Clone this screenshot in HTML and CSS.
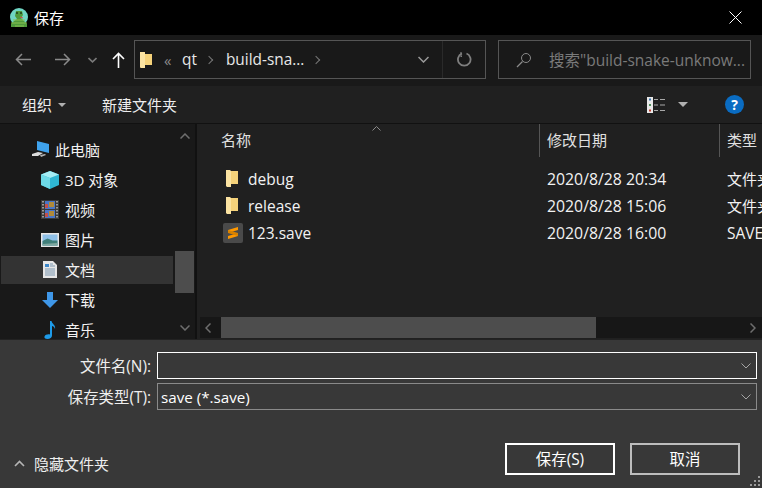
FILE: index.html
```html
<!DOCTYPE html>
<html lang="zh-CN">
<head>
    <meta charset="UTF-8">
    <title>保存</title>
    <link rel="stylesheet" href="styles.css">
</head>
<body>
    <div class="dialog">
        <header class="titlebar">
            <svg class="app-icon" width="20" height="20" viewBox="0 0 20 20">
                <circle cx="10" cy="9" r="9" fill="#6fd6c4"/>
                <path d="M7 3h6l1 4-2 3 3 3 3 3v3H2v-3l3-3 3-2-2-3z" fill="#4f9a3c"/>
                <path d="M2 15h16M4 12h12M6 18h9" stroke="#8cc152" stroke-width="1"/>
                <circle cx="8" cy="5" r="1" fill="#1d3b1d"/>
                <circle cx="12" cy="5" r="1" fill="#1d3b1d"/>
                <path d="M11 9l3 1" stroke="#d84a4a"/>
            </svg>
            <span class="title-text">保存</span>
            <svg class="close-icon" width="13" height="13" viewBox="0 0 13 13">
                <path d="M.5.5l12 12M12.5.5l-12 12" stroke="#fff" fill="none"/>
            </svg>
        </header>

        <nav class="navbar">
            <span class="nav-btn back">
                <svg width="17" height="13" viewBox="0 0 17 13"><path d="M16 6.500H1.500M7 1L1.500 6.500 7 12" stroke="#8a8a8a" stroke-width="1.500" fill="none"/></svg>
            </span>
            <span class="nav-btn forward">
                <svg width="17" height="13" viewBox="0 0 17 13"><path d="M1 6.500h14.500M10 1l5.500 5.500L10 12" stroke="#8a8a8a" stroke-width="1.500" fill="none"/></svg>
            </span>
            <span class="nav-btn recent">
                <svg width="9" height="6" viewBox="0 0 9 6"><path d="M.5 1l4 3.800 4-3.800" stroke="#7a7a7a" stroke-width="1.600" fill="none"/></svg>
            </span>
            <span class="nav-btn up">
                <svg width="13" height="16" viewBox="0 0 13 16"><path d="M6.500 16V1.500M1 7l5.500-5.500L12 7" stroke="#fff" stroke-width="1.600" fill="none"/></svg>
            </span>
            <div class="address">
                <svg class="addr-folder" width="12" height="16" viewBox="0 0 12 16">
                    <path d="M0 0h5v2h7v11H5v3H1l-1-1z" fill="#f5d27a"/>
                    <path d="M0 0h4l1 1v15H1l-1-1z" fill="#fbe3a2"/>
                </svg>
                <span class="crumb-more">«</span>
                <span class="crumb">qt</span>
                <span class="crumb-sep"></span>
                <span class="crumb">build-sna...</span>
                <span class="crumb-sep"></span>
                <span class="addr-drop">
                    <svg width="11" height="7" viewBox="0 0 11 7"><path d="M.5 1l5 5 5-5" stroke="#9a9a9a" stroke-width="1.500" fill="none"/></svg>
                </span>
                <span class="addr-refresh">
                    <svg width="15" height="15" viewBox="0 0 15 15"><path d="M9.500 1.500a6.300 6.300 0 1 1-4.500 0" stroke="#7f7f7f" stroke-width="1.800" fill="none"/><path d="M4 0v4.500h1" stroke="#7f7f7f" stroke-width="1.200" fill="none"/></svg>
                </span>
            </div>
            <div class="search">
                <svg width="16" height="16" viewBox="0 0 16 16"><circle cx="10" cy="6" r="4.500" stroke="#8a8a8a" fill="none"/><path d="M6.500 9.500L1 15" stroke="#8a8a8a" stroke-width="1.200"/></svg>
                <span class="search-text">搜索"build-snake-unknow...</span>
            </div>
        </nav>

        <div class="toolbar">
            <span class="tool org">组织<i class="caret"></i></span>
            <span class="tool">新建文件夹</span>
            <span class="tool-right">
                <svg width="18" height="16" viewBox="0 0 18 16">
                    <rect x="0" y="0" width="6" height="16" fill="#e8e8e8"/>
                    <rect x="2" y="1.500" width="2" height="2" fill="#3c76b0"/>
                    <rect x="2" y="7" width="2" height="2" fill="#4f8f5a"/>
                    <rect x="2" y="12.500" width="2" height="2" fill="#c0392b"/>
                    <path d="M7 2.500h4M13 2.500h5M7 8h4M13 8h5M7 13.500h4M13 13.500h5" stroke="#a8a8a8"/>
                </svg>
                <i class="caret view-caret"></i>
                <span class="help">?</span>
            </span>
        </div>

        <div class="main">
            <aside class="sidebar">
                <ul class="tree">
                    <li class="tree-item root">
                        <svg width="19" height="17" viewBox="0 0 19 17"><path d="M6 0l12 3v9L6 9z" fill="#3fa3ee"/><path d="M1 13l6-2 5 1-5 3H1z" fill="#dcdcdc"/><path d="M9 14l5-1 1 1-5 2z" fill="#b0b0b0"/></svg>
                        <span>此电脑</span>
                    </li>
                    <li class="tree-item">
                        <svg width="18" height="18" viewBox="0 0 18 18"><path d="M9 0l9 3.500v10.500L9 18 0 14V3.500z" fill="#2fb6d2"/><path d="M9 0l9 3.500L9 7 0 3.500z" fill="#a5eef5"/><path d="M0 3.500L9 7v11L0 14z" fill="#6edbe8"/></svg>
                        <span>3D 对象</span>
                    </li>
                    <li class="tree-item">
                        <svg width="18" height="19" viewBox="0 0 18 19"><rect width="18" height="19" fill="#3a3a3a"/><rect x="4" y="1" width="10" height="8" fill="#4a76c8"/><rect x="4" y="10" width="10" height="8" fill="#4a76c8"/><rect x="8" y="2" width="5" height="5" fill="#b08a3a"/><rect x="8" y="11" width="5" height="5" fill="#b08a3a"/><rect x="4" y="4" width="3" height="4" fill="#c0504d"/><rect x="4" y="13" width="3" height="4" fill="#c0504d"/><path d="M2 1v17M16 1v17" stroke="#bbb" stroke-width="1.500" stroke-dasharray="1.500 1.500"/></svg>
                        <span>视频</span>
                    </li>
                    <li class="tree-item">
                        <svg width="18" height="14" viewBox="0 0 18 14"><rect width="18" height="14" fill="#e6e6e6"/><rect x="1.500" y="1.500" width="15" height="11" fill="#8fc0e8"/><path d="M1.500 8l5-2.500 5 2 5 0v5h-15z" fill="#3f7f7a"/><path d="M1.500 11l15-1v2.500h-15z" fill="#7fa8a0"/></svg>
                        <span>图片</span>
                    </li>
                    <li class="tree-item active">
                        <svg width="14" height="17" viewBox="0 0 14 17"><path d="M0 0h10l4 4v13H0z" fill="#e6e6e6"/><path d="M2 3h4v3H2z" fill="#3c86c8"/><path d="M7 3h3M7 5h5M2 8h10M2 10h10M2 12h10M2 14h10" stroke="#7d98b0"/></svg>
                        <span>文档</span>
                    </li>
                    <li class="tree-item">
                        <svg width="16" height="16" viewBox="0 0 16 16"><path d="M5 0h6v8h5l-8 8-8-8h5z" fill="#3f97e8"/></svg>
                        <span>下载</span>
                    </li>
                    <li class="tree-item">
                        <svg width="12" height="18" viewBox="0 0 12 18"><path d="M6 0h1.500c.5 3 4.500 4 3.500 8-.500-2-2-3-3-3v9.500c0 2-2 3.500-4.500 3.500S0 17 .5 15.500 3.500 13 6 13.500z" fill="#1e9be8"/></svg>
                        <span>音乐</span>
                    </li>
                </ul>
                <div class="vscroll">
                    <svg width="10" height="6" viewBox="0 0 10 6"><path d="M.5 5.500L5 1l4.500 4.500" stroke="#6e6e6e" stroke-width="1.500" fill="none"/></svg>
                    <div class="vtrack"><div class="vthumb"></div></div>
                    <svg width="10" height="6" viewBox="0 0 10 6"><path d="M.5.500L5 5l4.500-4.500" stroke="#6e6e6e" stroke-width="1.500" fill="none"/></svg>
                </div>
            </aside>

            <section class="files">
                <div class="file-head">
                    <svg class="sort-mark" width="9" height="5" viewBox="0 0 9 5"><path d="M.5 4.500l4-4 4 4" stroke="#8a8a8a" fill="none"/></svg>
                    <span class="col col-name">名称</span>
                    <span class="col col-date">修改日期</span>
                    <span class="col col-type">类型</span>
                </div>
                <div class="file-rows">
                    <div class="file-row">
                        <span class="col-name">
                            <svg width="12" height="17" viewBox="0 0 12 17"><path d="M5 1h7v13H5z" fill="#f5d27a"/><path d="M0 0h4l1 1v16H1l-1-1z" fill="#fbe3a2"/></svg>
                            debug
                        </span>
                        <span class="col-date">2020/8/28 20:34</span>
                        <span class="col-type">文件夹</span>
                    </div>
                    <div class="file-row">
                        <span class="col-name">
                            <svg width="12" height="17" viewBox="0 0 12 17"><path d="M5 1h7v13H5z" fill="#f5d27a"/><path d="M0 0h4l1 1v16H1l-1-1z" fill="#fbe3a2"/></svg>
                            release
                        </span>
                        <span class="col-date">2020/8/28 15:06</span>
                        <span class="col-type">文件夹</span>
                    </div>
                    <div class="file-row">
                        <span class="col-name save-name">
                            <svg width="20" height="20" viewBox="0 0 20 20"><rect width="20" height="20" rx="2" fill="#4a4a4a"/><path d="M5 7l10-3v3L5 10zM5 13l10-3v3L5 16z" fill="#ff9800"/><path d="M5 7v3l10 3v-3z" fill="#d98200"/></svg>
                            123.save
                        </span>
                        <span class="col-date">2020/8/28 16:00</span>
                        <span class="col-type type-save">SAVE 文件</span>
                    </div>
                </div>
                <div class="hscroll">
                    <svg width="6" height="10" viewBox="0 0 6 10"><path d="M5.500.5L1 5l4.500 4.500" stroke="#6e6e6e" stroke-width="1.500" fill="none"/></svg>
                    <div class="htrack"><div class="hthumb"></div></div>
                    <svg width="6" height="10" viewBox="0 0 6 10"><path d="M.5.500L5 5 .5 9.500" stroke="#6e6e6e" stroke-width="1.500" fill="none"/></svg>
                </div>
            </section>
        </div>

        <footer class="footer">
            <div class="fields">
                <label class="field-label">文件名(N):</label>
                <div class="combo focus">
                    <span></span>
                    <svg width="10" height="6" viewBox="0 0 10 6"><path d="M.5.500L5 5l4.500-4.500" stroke="#a5a5a5" fill="none"/></svg>
                </div>
                <label class="field-label">保存类型(T):</label>
                <div class="combo">
                    <span>save (*.save)</span>
                    <svg width="10" height="6" viewBox="0 0 10 6"><path d="M.5.500L5 5l4.500-4.500" stroke="#a5a5a5" fill="none"/></svg>
                </div>
            </div>
            <div class="actions">
                <span class="hide-folders">
                    <svg width="11" height="7" viewBox="0 0 11 7"><path d="M1 6l4.500-4.500L10 6" stroke="#b5b5b5" stroke-width="1.600" fill="none"/></svg>
                    隐藏文件夹
                </span>
                <button class="btn primary">保存(S)</button>
                <button class="btn">取消</button>
            </div>
            <svg class="grip" width="10" height="10" viewBox="0 0 10 10"><path d="M8 0h2v2H8zM4 4h2v2H4zM8 4h2v2H8zM0 8h2v2H0zM4 8h2v2H4zM8 8h2v2H8z" fill="#9a9a9a"/></svg>
        </footer>
    </div>
</body>
</html>
```

FILE: styles.css
```css
*{
    margin: 0;
    padding: 0;
    box-sizing: border-box;
    font-family: "Open Sans", "Noto Sans CJK SC", sans-serif;
}
body{
    width: 762px;
    height: 488px;
    overflow: hidden;
    background-color: #383838;
    color: #fff;
    font-size: 15px;
}
.dialog{
    display: flex;
    flex-direction: column;
    height: 488px;
}
svg{
    display: block;
    flex: none;
}

/* title */
.titlebar{
    height: 35px;
    background-color: #000;
    display: flex;
    align-items: center;
    padding: 0 20px 0 9px;
}
.title-text{
    margin-left: 5px;
    flex: 1;
}

/* navigation */
.navbar{
    height: 51px;
    background-color: #191919;
    display: flex;
    align-items: flex-start;
    padding-top: 5px;
}
.nav-btn{
    height: 39px;
    display: flex;
    align-items: center;
}
.back{ width: 54px; padding-left: 15px; }
.forward{ width: 34px; }
.recent{ width: 24px; }
.up{ width: 22px; }
.address{
    width: 352px;
    height: 39px;
    border: 1px solid #555;
    display: flex;
    align-items: center;
    padding-left: 5px;
}
.crumb-more{
    margin-left: 12px;
    width: 18px;
    color: #8a8a8a;
}
.crumb{
    color: #e8e8e8;
    font-size: 15.4px;
}
.crumb-sep{
    width: 6px;
    height: 6px;
    border-top: 1.5px solid #777;
    border-right: 1.500px solid #777;
    transform: rotate(45deg);
    margin: 0 14px 0 9px;
}
.addr-drop{
    margin-left: auto;
    width: 38px;
    display: flex;
    justify-content: center;
}
.addr-refresh{
    width: 43px;
    height: 37px;
    border-left: 1px solid #2a2a2a;
    display: flex;
    align-items: center;
    justify-content: center;
}
.search{
    width: 253px;
    height: 39px;
    margin-left: 12px;
    border: 1px solid #555;
    display: flex;
    align-items: center;
    padding-left: 17px;
}
.search-text{
    margin-left: 17px;
    color: #7a7a7a;
    white-space: nowrap;
    font-size: 15.5px;
}

/* toolbar */
.toolbar{
    height: 38px;
    background-color: #202020;
    border-bottom: 1px solid #111;
    display: flex;
    align-items: center;
    padding-left: 22px;
}
.tool{
    color: #eee;
}
.org{
    width: 80px;
    display: flex;
    align-items: center;
}
.caret{
    display: block;
    width: 0;
    height: 0;
    border-left: 4px solid transparent;
    border-right: 4px solid transparent;
    border-top: 4px solid #b0b0b0;
    margin-left: 6px;
}
.tool-right{
    margin-left: auto;
    display: flex;
    align-items: center;
    padding-right: 18px;
}
.view-caret{
    margin-left: 13px;
    border-left-width: 5px;
    border-right-width: 5px;
    border-top-width: 5px;
}
.help{
    width: 19px;
    height: 19px;
    margin-left: 37px;
    border-radius: 50%;
    background-color: #0a6cc2;
    color: #fff;
    font-weight: bold;
    font-size: 14px;
    line-height: 19px;
    text-align: center;
}

/* main area */
.main{
    height: 215px;
    display: flex;
}
.sidebar{
    width: 197px;
    background-color: #191919;
    border-right: 2px solid #111;
    display: flex;
    overflow: hidden;
}
.tree{
    list-style: none;
    width: 175px;
    padding: 11px 2px 0 1px;
    flex: none;
}
.tree-item{
    height: 30px;
    display: flex;
    align-items: center;
    padding-left: 40px;
    padding-bottom: 1px;
    color: #f2f2f2;
    white-space: nowrap;
}
.tree-item svg{
    margin-right: 6px;
    width: 18px;
}
.tree-item.root{
    padding-left: 30px;
}
.tree-item.root svg{
    width: 19px;
    margin-right: 5px;
}
.tree-item.active{
    background-color: #333;
    height: 28px;
    margin: 1px 0;
}
.vscroll{
    width: 20px;
    display: flex;
    flex-direction: column;
    align-items: center;
    padding-top: 9px;
}
.vtrack{
    height: 180px;
    width: 100%;
    margin: 3px 0;
    padding-top: 109px;
    padding-right: 1px;
}
.vthumb{
    height: 42px;
    background-color: #4d4d4d;
}

/* file list */
.files{
    flex: 1;
    min-width: 0;
    background-color: #202020;
    display: flex;
    flex-direction: column;
    position: relative;
    overflow: hidden;
}
.sort-mark{
    position: absolute;
    left: 175px;
    top: 2px;
}
.file-head{
    height: 33px;
    display: flex;
    color: #e0e0e0;
    padding-left: 2px;
}
.col{
    height: 33px;
    display: flex;
    align-items: center;
    padding-bottom: 2px;
    border-right: 1px solid #555;
}
.col-name{
    width: 340px;
    padding-left: 22px;
    flex: none;
}
.col.col-name{
    width: 341px;
}
.col-date{
    width: 180px;
    padding-left: 8px;
    flex: none;
}
.col.col-date{
    padding-left: 7px;
}
.col-type{
    padding-left: 8px;
    white-space: nowrap;
    flex: none;
}
.col.col-type{
    padding-left: 7px;
    border-right: 0;
}
.file-rows{
    flex: 1;
    padding-top: 8px;
    padding-left: 2px;
}
.file-row{
    height: 27px;
    display: flex;
    align-items: center;
    color: #f2f2f2;
    font-size: 15.5px;
}
.file-row .col-date{
    font-size: 15.8px;
}
.file-row .col-type{
    font-size: 15px;
}
.file-row .type-save{
    font-size: 15.5px;
}
.file-row .col-name{
    display: flex;
    align-items: center;
    gap: 10px;
    padding-left: 27px;
}
.file-row .save-name{
    padding-left: 24px;
    gap: 5px;
}
.hscroll{
    height: 21px;
    margin-left: 3px;
    margin-bottom: 1px;
    background-color: #171717;
    display: flex;
    align-items: center;
    padding: 0 6px 0 5px;
}
.htrack{
    flex: 1;
    height: 100%;
    padding: 0 154px 0 10px;
}
.hthumb{
    height: 100%;
    background-color: #4d4d4d;
}

/* bottom form */
.footer{
    flex: 1;
    background-color: #383838;
    border-top: 1px solid #222;
    padding: 12px 5px 0 0;
    position: relative;
}
.fields{
    display: grid;
    grid-template-columns: 151px 600px;
    column-gap: 6px;
    row-gap: 4px;
}
.field-label{
    height: 27px;
    line-height: 29px;
    text-align: right;
    color: #eee;
    white-space: nowrap;
    font-size: 15.4px;
}
.combo{
    height: 27px;
    border: 1px solid #8a8a8a;
    display: flex;
    align-items: center;
    justify-content: space-between;
    padding: 0 5px 0 3px;
    font-size: 15.2px;
}
.combo.focus{
    border-color: #fff;
}
.actions{
    display: flex;
    align-items: flex-start;
    margin-top: 33px;
    padding-right: 17px;
}
.hide-folders{
    display: flex;
    align-items: center;
    gap: 9px;
    margin: 7px auto 0 14px;
    color: #eee;
    height: 26px;
}
.btn{
    width: 110px;
    height: 32px;
    background-color: #383838;
    color: #fff;
    font-size: 15.4px;
    border: 2px solid #bdbdbd;
    margin-left: 15px;
    padding-bottom: 2px;
}
.btn.primary{
    border-color: #fff;
}
.grip{
    position: absolute;
    right: 2px;
    bottom: 2px;
}
```
